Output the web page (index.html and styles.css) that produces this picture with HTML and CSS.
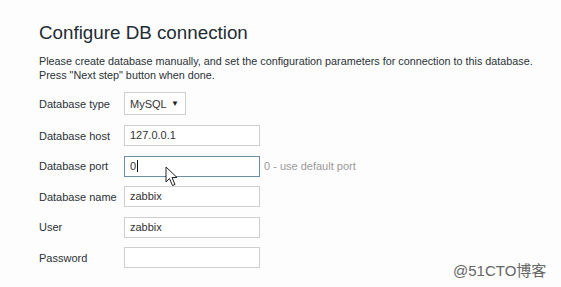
FILE: index.html
```html
<!DOCTYPE html>
<html>
<head>
<meta charset="utf-8">
<link rel="stylesheet" href="styles.css">
</head>
<body>
<div class="page">
  <h1 class="title">Configure DB connection</h1>
  <p class="intro">Please create database manually, and set the configuration parameters for connection to this database.<br>Press "Next step" button when done.</p>
  <div class="form">
    <div class="row row-select">
      <div class="label">Database type</div>
      <div class="select"><span>MySQL</span><span class="arrow">▼</span></div>
    </div>
    <div class="row">
      <div class="label">Database host</div>
      <div class="input">127.0.0.1</div>
    </div>
    <div class="row">
      <div class="label">Database port</div>
      <div class="input focus">0<span class="caret"></span></div>
      <div class="hint">0 - use default port</div>
    </div>
    <div class="row">
      <div class="label">Database name</div>
      <div class="input">zabbix</div>
    </div>
    <div class="row">
      <div class="label">User</div>
      <div class="input">zabbix</div>
    </div>
    <div class="row">
      <div class="label">Password</div>
      <div class="input"></div>
    </div>
  </div>
  <svg class="pointer" width="14" height="22" viewBox="0 0 14 22"><path d="M1 1 L1 16 L4.5 12.5 L7.5 19.5 L10 18.5 L7 11.5 L12 11.5 Z" fill="#fff" stroke="#222" stroke-width="1" stroke-linejoin="round"/></svg>
  <div class="watermark">@51CTO博客</div>
</div>
</body>
</html>
```
FILE: styles.css
```css
html, body { margin: 0; padding: 0; }
body {
  width: 561px; height: 287px; overflow: hidden;
  background: #fdfdfd;
  font-family: "Liberation Sans", Arial, sans-serif;
  color: #1f2c33;
}
.page { position: relative; padding: 21px 0 0 39px; height: 266px; }
.title { margin: 0; font-size: 18.8px; font-weight: normal; line-height: 23px; color: #1f2c33; }
.intro { margin: 10px 0 0; font-size: 10.8px; line-height: 14px; color: #2a3236; }
.form { margin-top: 10px; display: flex; flex-direction: column; }
.row { display: flex; align-items: center; height: 21px; margin-bottom: 9.5px; }
.row-select { height: 23px; margin-bottom: 10px; }
.label { width: 85px; font-size: 11px; color: #2a3236; }
.input {
  box-sizing: border-box; width: 136px; height: 21px;
  border: 1px solid #cfcfcf; background: #fff;
  font-size: 11px; color: #333; padding: 0 5px; line-height: 19px;
  display: flex; align-items: center;
}
.input.focus { border-color: #6d8ea5; }
.caret { display: inline-block; width: 1px; height: 12px; background: #111; margin-left: 1px; }
.select {
  box-sizing: border-box; width: 62px; height: 23px;
  border: 1px solid #cfcfcf; background: #fff;
  font-size: 11px; color: #333; padding: 0 6px 0 5px;
  display: flex; align-items: center; justify-content: space-between;
}
.arrow { font-size: 8px; color: #222; }
.hint { margin-left: 4px; font-size: 11px; color: #999; }
.pointer { position: absolute; left: 165px; top: 166px; }
.watermark { position: absolute; left: 453px; top: 259px; font-size: 15px; color: #666; font-family: "Liberation Sans", "Noto Sans CJK SC", sans-serif; }
```
